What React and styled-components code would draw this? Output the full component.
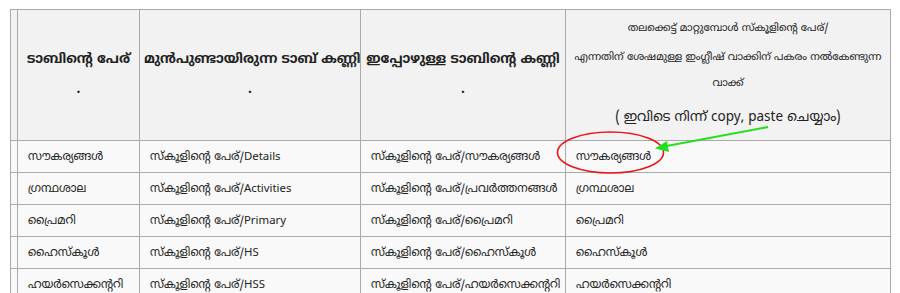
import React from 'react';
import styled, { createGlobalStyle } from 'styled-components';

const rows = [
	['സൗകര്യങ്ങൾ', 'സ്കൂളിന്റെ പേര്/Details', 'സ്കൂളിന്റെ പേര്/സൗകര്യങ്ങൾ', 'സൗകര്യങ്ങൾ'],
	['ഗ്രന്ഥശാല', 'സ്കൂളിന്റെ പേര്/Activities', 'സ്കൂളിന്റെ പേര്/പ്രവർത്തനങ്ങൾ', 'ഗ്രന്ഥശാല'],
	['പ്രൈമറി', 'സ്കൂളിന്റെ പേര്/Primary', 'സ്കൂളിന്റെ പേര്/പ്രൈമറി', 'പ്രൈമറി'],
	['ഹൈസ്കൂൾ', 'സ്കൂളിന്റെ പേര്/HS', 'സ്കൂളിന്റെ പേര്/ഹൈസ്കൂൾ', 'ഹൈസ്കൂൾ'],
	['ഹയർസെക്കന്ററി', 'സ്കൂളിന്റെ പേര്/HSS', 'സ്കൂളിന്റെ പേര്/ഹയർസെക്കന്ററി', 'ഹയർസെക്കന്ററി']
];

const App = () => {
	return (
		<>
			<GlobalStyle />
			<Page>
				<TableWrap>
					<Table>
						<colgroup>
							<col style={{ width: 7 }} />
							<col style={{ width: 122 }} />
							<col style={{ width: 221 }} />
							<col style={{ width: 205 }} />
							<col style={{ width: 325 }} />
						</colgroup>
						<thead>
							<HeadRow>
								<Th />
								<Th>
									ടാബിന്റെ പേര്
									<br />.
								</Th>
								<Th>
									മുൻപുണ്ടായിരുന്ന ടാബ് കണ്ണി
									<br />.
								</Th>
								<Th>
									ഇപ്പോഴുള്ള ടാബിന്റെ കണ്ണി
									<br />.
								</Th>
								<NoteTh>
									<NoteLine gap={3}>തലക്കെട്ട് മാറ്റുമ്പോൾ സ്കൂളിന്റെ പേര്/</NoteLine>
									<NoteLine gap={8}>
										എന്നതിന് ശേഷമുള്ള ഇംഗ്ലീഷ് വാക്കിന് പകരം നൽകേണ്ടുന്ന
										<br />
										വാക്ക്
									</NoteLine>
									<NoteLine big>( ഇവിടെ നിന്ന് copy, paste ചെയ്യാം)</NoteLine>
								</NoteTh>
							</HeadRow>
						</thead>
						<tbody>
							{rows.map((row, i) => (
								<Row key={i}>
									<Td />
									{row.map((cell, j) => (
										<Td key={j}>{cell}</Td>
									))}
								</Row>
							))}
						</tbody>
					</Table>
					{/* red circle + green arrow drawn over the table */}
					<Markup width="900" height="293" viewBox="0 0 900 293">
						<ellipse cx="610.5" cy="152.5" rx="53" ry="20.5" fill="none" stroke="#e8161b" strokeWidth="1.6" />
						<line x1="768" y1="127" x2="664" y2="146.5" stroke="#22e01e" strokeWidth="2" />
						<polygon points="655,148.5 667,141 669,152" fill="#22e01e" />
					</Markup>
				</TableWrap>
			</Page>
		</>
	);
};

export default App;

// Styled-components
const GlobalStyle = createGlobalStyle`
	html, body {
		margin: 0;
		background: #ffffff;
		overflow: hidden;
	}
`;

const Page = styled.div`
	padding: 9px 10px 0 10px;
	font-family: 'Noto Sans Malayalam', 'Noto Sans', 'DejaVu Sans', sans-serif;
	color: #222222;
`;

const TableWrap = styled.div`
	position: relative;
`;

const Table = styled.table`
	border-collapse: collapse;
	table-layout: fixed;
	width: 880px;
	background: #f9f9f9;
	border: 1px solid #aaaaaa;
`;

const HeadRow = styled.tr`
	height: 131px;
`;

const Th = styled.th`
	background: #f2f2f2;
	border: 1px solid #aaaaaa;
	padding: 0 4px;
	font-size: 13.5px;
	font-weight: bold;
	line-height: 30px;
	text-align: center;
	vertical-align: middle;
	white-space: nowrap;
`;

const NoteTh = styled(Th)`
	font-weight: normal;
	padding: 6px 4px 0;
	vertical-align: top;
`;

const NoteLine = styled.div`
	font-size: ${props => (props.big ? '13.5px' : '10.5px')};
	line-height: 26px;
	margin-bottom: ${props => props.gap || 0}px;
`;

const Row = styled.tr`
	height: 32px;
`;

const Td = styled.td`
	border: 1px solid #aaaaaa;
	padding: 0 8px 0 10px;
	font-size: 11.4px;
	white-space: nowrap;
	overflow: hidden;
	vertical-align: middle;
	&:first-child {
		padding: 0;
	}
`;

const Markup = styled.svg`
	position: absolute;
	left: -10px;
	top: -9px;
	pointer-events: none;
`;
